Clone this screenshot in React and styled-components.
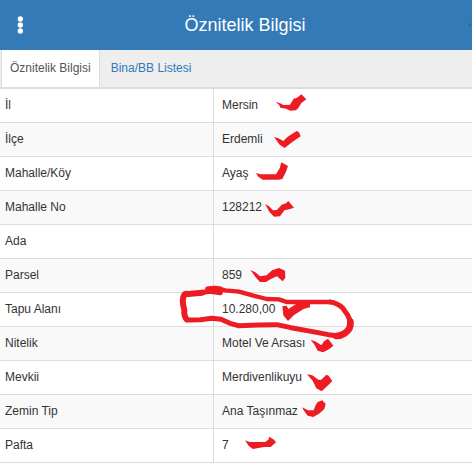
import { useState } from "react";
import styled, { createGlobalStyle } from "styled-components";

const GlobalStyle = createGlobalStyle`
  * {
    box-sizing: border-box;
  }

  body {
    margin: 0;
    overflow: hidden;
    background: #fff;
    color: #333;
    font-family: "Liberation Sans", Arial, sans-serif;
    font-size: 12px;
    line-height: 17px;
  }
`;

const Page = styled.div`
  position: relative;
  overflow: hidden;
`;

const Header = styled.header`
  display: grid;
  grid-template-columns: 40px 1fr 22px;
  align-items: center;
  height: 50px;
  background: #337ab7;
  color: #fff;
`;

const Title = styled.h1`
  margin: 0;
  text-align: center;
  font-size: 18px;
  font-weight: 400;
  line-height: 24px;
`;

const IconButton = styled.button`
  display: flex;
  padding: 0;
  padding-left: ${(props) => props.$indent};
  border: 0;
  background: none;
  color: inherit;
  cursor: pointer;
`;

const Tabs = styled.nav`
  display: flex;
  gap: 2px;
  padding-left: 1px;
  border-bottom: 2px solid #ddd;
  background: #eee;
`;

const Tab = styled.button`
  padding: 10px 8px;
  border: solid ${(props) => (props.$active ? "#ddd" : "transparent")};
  border-width: 0 1px;
  background: ${(props) => (props.$active ? "#fff" : "transparent")};
  color: ${(props) => (props.$active ? "#555" : "#337ab7")};
  font: inherit;
  cursor: pointer;
`;

const Table = styled.table`
  width: 100%;
  border-collapse: separate;
  border-spacing: 0;
  table-layout: fixed;
`;

const Row = styled.tr`
  &:nth-child(even) {
    background: #f9f9f9;
  }
`;

const Name = styled.th`
  width: 213px;
  padding: 8px 5px;
  border-bottom: 1px solid #ddd;
  font-weight: 400;
  text-align: left;
`;

const Value = styled.td`
  height: 34px;
  padding: 8px;
  border-bottom: 1px solid #ddd;
  border-left: 1px solid #ddd;
`;

const Markup = styled.svg`
  position: absolute;
  top: 0;
  left: 0;
  width: 472px;
  height: 463px;
  pointer-events: none;
`;

const rows = [
  ["İl", "Mersin"],
  ["İlçe", "Erdemli"],
  ["Mahalle/Köy", "Ayaş"],
  ["Mahalle No", "128212"],
  ["Ada", ""],
  ["Parsel", "859"],
  ["Tapu Alanı", "10.280,00"],
  ["Nitelik", "Motel Ve Arsası"],
  ["Mevkii", "Merdivenlikuyu"],
  ["Zemin Tip", "Ana Taşınmaz"],
  ["Pafta", "7"],
];

// pen marks, three drawing units to a pixel
const ticks = [
  { x: 600, y: 255, d: "M227 50L244 56L250 60L270 59L281 41L291 38L304 28L319 43L304 54L295 69L288 76L271 77L258 71L241 68L238 61Z" },
  { x: 600, y: 255, d: "M222 156L235 160L250 168L263 155L290 138L297 142L302 154L277 171L254 189L239 179Z" },
  { x: 600, y: 450, d: "M168 69L182 73L228 73L239 55L244 37L264 48L258 65L247 87L234 89L188 89L175 80Z" },
  { x: 600, y: 450, d: "M195 162L207 169L219 181L231 180L245 164L258 160L265 153L282 173L268 178L253 181L240 199L222 200L208 185Z" },
  { x: 510, y: 765, d: "M241 45L256 52L270 64L290 61L306 46L327 39L345 47L346 68L338 79L321 64L301 73L288 81L270 81L257 67Z" },
  { x: 780, y: 765, d: "M67 154L80 152L85 162L108 147L122 142L150 146L150 157L132 161L102 180L84 198L70 181Z" },
  { x: 600, y: 975, d: "M332 44L348 50L359 58L365 60L372 49L384 41L390 49L400 62L387 73L369 82L353 77L344 60Z" },
  { x: 600, y: 975, d: "M321 148L337 151L355 164L364 164L379 149L386 152L397 168L385 180L365 199L349 190L338 167Z" },
  { x: 600, y: 1170, d: "M306 52L324 61L341 61L346 47L353 36L367 31L377 42L373 57L359 70L340 81L323 77L313 64Z" },
  { x: 600, y: 1170, d: "M135 151L149 156L195 156L205 149L208 140L222 149L228 157L212 171L192 171L159 177L147 169Z" },
];

const strokes = [
  { width: 15, d: "M113 102Q135 98 151 102" },
  { width: 13, d: "M145 101L165 106L207 110L250 122L290 132L327 133L350 141L480 141" },
  { width: 15, d: "M480 141Q502 143 519 160Q534 178 543 202" },
  { width: 20, d: "M541 200Q544 222 524 235Q512 243 499 243" },
  { width: 15, d: "M506 243L475 239L424 229L363 218L320 209L265 210L205 212L180 205L153 193L125 190L92 194L53 195" },
  { width: 18, d: "M50 193Q41 184 43 164Q36 143 40 126Q43 115 55 117L96 113" },
  { width: 15, d: "M90 113L120 109L151 113" },
];

const App = () => {
  const [tab, setTab] = useState(0);

  return (
    <Page>
      <GlobalStyle />
      <Header>
        <IconButton $indent="17px" aria-label="Menü">
          <svg width="7" height="18" viewBox="0 0 7 18" fill="currentColor">
            <circle cx="3.3" cy="3" r="2.7" />
            <circle cx="3.3" cy="9" r="2.7" />
            <circle cx="3.3" cy="15" r="2.7" />
          </svg>
        </IconButton>
        <Title>Öznitelik Bilgisi</Title>
        <IconButton $indent="18px" aria-label="Kapat">
          <svg width="14" height="14" viewBox="0 0 14 14">
            <path
              d="M2 2L12 12M12 2L2 12"
              stroke="#296292"
              strokeWidth="4"
            />
          </svg>
        </IconButton>
      </Header>
      <Tabs>
        {["Öznitelik Bilgisi", "Bina/BB Listesi"].map((label, i) => (
          <Tab key={label} $active={tab === i} onClick={() => setTab(i)}>
            {label}
          </Tab>
        ))}
      </Tabs>
      <Table>
        <tbody>
          {rows.map(([name, value]) => (
            <Row key={name}>
              <Name scope="row">{name}</Name>
              <Value>{value}</Value>
            </Row>
          ))}
        </tbody>
      </Table>
      <Markup viewBox="0 0 1416 1389" aria-hidden="true">
        <g fill="#ed1c24">
          {ticks.map(({ x, y, d }) => (
            <path key={d} d={d} transform={`translate(${x} ${y})`} />
          ))}
        </g>
        <g
          transform="translate(510 765)"
          fill="none"
          stroke="#ed1c24"
          strokeLinecap="round"
          strokeLinejoin="round"
        >
          {strokes.map(({ width, d }) => (
            <path key={d} d={d} strokeWidth={width} />
          ))}
        </g>
      </Markup>
    </Page>
  );
};

export default App;
